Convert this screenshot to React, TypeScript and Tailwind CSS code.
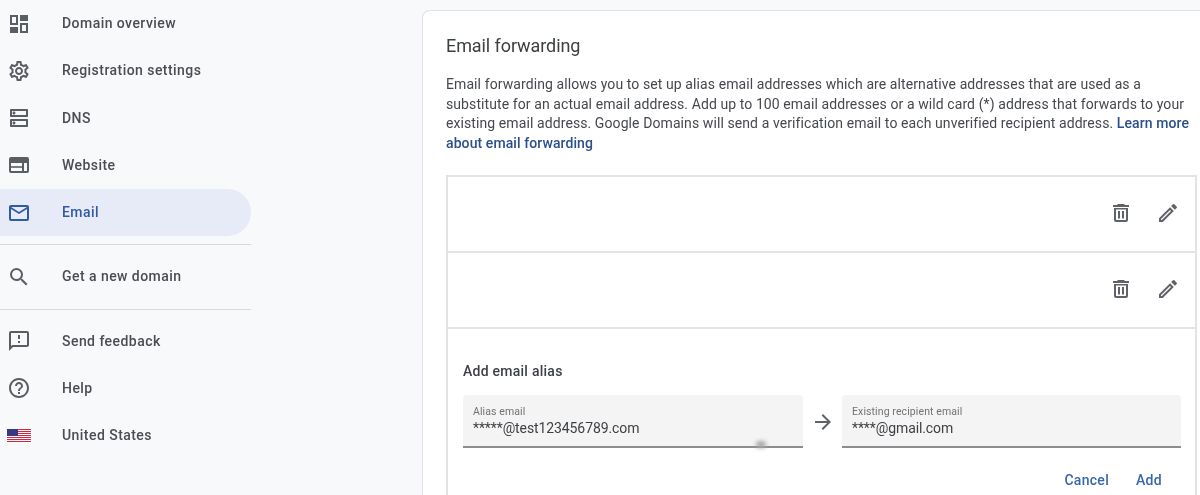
import React from "react";
import { MdOutlineSettings, MdOutlineDns, MdMailOutline, MdSearch, MdOutlineFeedback, MdHelpOutline, MdArrowForward } from "react-icons/md";

const DashIcon = ({ className }: { className?: string }) => (
  <svg viewBox="0 0 24 24" width="24" height="24" className={className} fill="currentColor">
    <path fillRule="evenodd" d="M3 3h8v10H3zM5 5v6h4V5z" />
    <path d="M13 3h8v6h-8zM3 15h8v6H3z" />
    <path fillRule="evenodd" d="M13 11h8v10h-8zM15 13v6h4v-6z" />
  </svg>
);
const WebIcon = ({ className }: { className?: string }) => (
  <svg viewBox="0 0 24 24" width="24" height="24" className={className} fill="currentColor">
    <path fillRule="evenodd" d="M4 4h16a2 2 0 0 1 2 2v12a2 2 0 0 1-2 2H4a2 2 0 0 1-2-2V6a2 2 0 0 1 2-2zM4 10v8h11v-8zM17 10v8h3v-8z" />
    <path d="M4 13.2h11v1.6H4z" />
  </svg>
);
const TrashIcon = () => (
  <svg viewBox="0 0 24 24" width="24" height="24" fill="#5f6368">
    <path fillRule="evenodd" d="M9 3h6l1 1h4v2H4V4h4zM5 7h14v12a2 2 0 0 1-2 2H7a2 2 0 0 1-2-2zM7 8.5V19h10V8.5z" />
    <path d="M9 10h2v7.5H9zM13 10h2v7.5h-2z" />
  </svg>
);
const PencilIcon = () => (
  <svg viewBox="0 0 24 24" width="24" height="24" fill="#5f6368">
    <path fillRule="evenodd" d="M3 17.25V21h3.75L17.81 9.94l-3.75-3.75zM5.92 19H5v-.92l9.06-9.06.92.92z" />
    <path d="M20.71 7.04a1 1 0 0 0 0-1.41l-2.34-2.34a1 1 0 0 0-1.41 0l-1.83 1.83 3.75 3.75z" />
  </svg>
);
const Flag = () => (
  <svg viewBox="0 0 24 13" width="24" height="13" shapeRendering="crispEdges">
    <rect width="24" height="13" fill="#fbf6f7" />
    <path d="M0 0h24v1H0zM0 2h24v1H0zM0 4h24v1H0zM0 6h24v1H0zM0 8h24v1H0zM0 10h24v1H0zM0 12h24v1H0z" fill="#cc2a40" />
    <rect width="11" height="7" fill="#333a80" />
  </svg>
);

type Item = { label: string; icon: React.ReactNode; active?: boolean };

const NavItem = ({ label, icon, active }: Item) => (
  <div className={`flex h-[47.25px] w-[251px] items-center rounded-r-full ${active ? "bg-[#e6ebf7] text-[#2f5ba5]" : "text-[#4a4d52]"}`}>
    <div className={`flex w-[62px] shrink-0 justify-center pr-[26px] pl-[1px] ${active ? "text-[#2f5ba5]" : "text-[#5a5d62]"}`}>{icon}</div>
    <span className="text-[14px] font-medium tracking-[0.45px]">{label}</span>
  </div>
);

const Row = () => (
  <div className="flex h-[76px] items-center justify-end gap-[23px] border-b-2 border-[#e2e3e5] pr-[15px] pb-[2px]">
    <TrashIcon />
    <PencilIcon />
  </div>
);

const Field = ({ label, value, className, children }: { label: string; value: string; className: string; children?: React.ReactNode }) => (
  <div className={`relative flex h-[53px] flex-col rounded-t border-b-2 border-[#8b8d90] bg-[#f4f4f4] pt-[10px] pl-[10px] ${className}`}>
    <span className="text-[10.5px] leading-[14px] tracking-[0.1px] text-[#6f7276]">{label}</span>
    <span className="text-[14px] leading-[19px] tracking-[-0.1px] text-[#3c3f43]">{value}</span>
    {children}
  </div>
);

export default function App() {
  return (
    <div className="flex h-[495px] w-[1200px] overflow-hidden bg-[#f8f9fb] font-['Roboto',sans-serif] blur-[0.4px]">
      <aside className="w-[422px] shrink-0">
        <NavItem label="Domain overview" icon={<DashIcon />} />
        <NavItem label="Registration settings" icon={<MdOutlineSettings size={24} />} />
        <NavItem label="DNS" icon={<MdOutlineDns size={24} />} />
        <NavItem label="Website" icon={<WebIcon />} />
        <NavItem label="Email" active icon={<MdMailOutline size={24} />} />
        <div className="mt-2 mb-2 h-px w-[251px] bg-[#d8d9dc]" />
        <NavItem label="Get a new domain" icon={<MdSearch size={24} />} />
        <div className="mt-2 mb-2 h-px w-[251px] bg-[#d8d9dc]" />
        <NavItem label="Send feedback" icon={<MdOutlineFeedback size={24} />} />
        <NavItem label="Help" icon={<MdHelpOutline size={24} />} />
        <NavItem label="United States" icon={<Flag />} />
      </aside>
      <main className="mt-[10px] h-[520px] min-w-0 flex-1 rounded-tl-lg border-t border-l border-[#e0e1e3] bg-white pt-[23px] pl-[23px]">
        <h1 className="text-[18px] leading-[24px] tracking-[-0.08px] text-[#3c4043]">Email forwarding</h1>
        <p className="mt-[17px] w-[750px] text-[14px] leading-[19.6px] tracking-[0.09px] text-[#45484d]">
          Email forwarding allows you to set up alias email addresses which are alternative addresses that are used as a
          substitute for an actual email address. Add up to 100 email addresses or a wild card (*) address that forwards to your
          existing email address. Google Domains will send a verification email to each unverified recipient address.{" "}
          <a className="font-medium text-[#2b4f8a]">Learn more</a>{" "}
          <a className="font-medium text-[#2b4f8a]">about email forwarding</a>
        </p>
        <div className="mt-[22px] h-[400px] w-[751px] border-x-2 border-t-2 border-[#e2e3e5]">
          <Row />
          <Row />
          <div className="pt-[33px] pr-[14px] pl-[15px]">
            <h2 className="text-[14px] leading-[18px] font-medium tracking-[0.25px] text-[#3c3f43]">Add email alias</h2>
            <div className="mt-[15px] flex items-center">
              <Field label="Alias email" value="*****@test123456789.com" className="w-[340px]">
                <div className="absolute right-[37px] bottom-[-2px] h-[7px] w-[10px] rounded-full bg-[#a6a7a9] blur-[2px]" />
              </Field>
              <div className="flex w-[39px] justify-center text-[#5f6368]"><MdArrowForward size={24} /></div>
              <Field label="Existing recipient email" value="****@gmail.com" className="w-[339px]" />
            </div>
            <div className="mt-[22px] flex w-[717px] justify-end gap-[27px] pr-[18px] text-[14px] leading-[20px] font-medium tracking-[0.3px] text-[#3767ad]">
              <span>Cancel</span>
              <span>Add</span>
            </div>
          </div>
        </div>
      </main>
    </div>
  );
}
